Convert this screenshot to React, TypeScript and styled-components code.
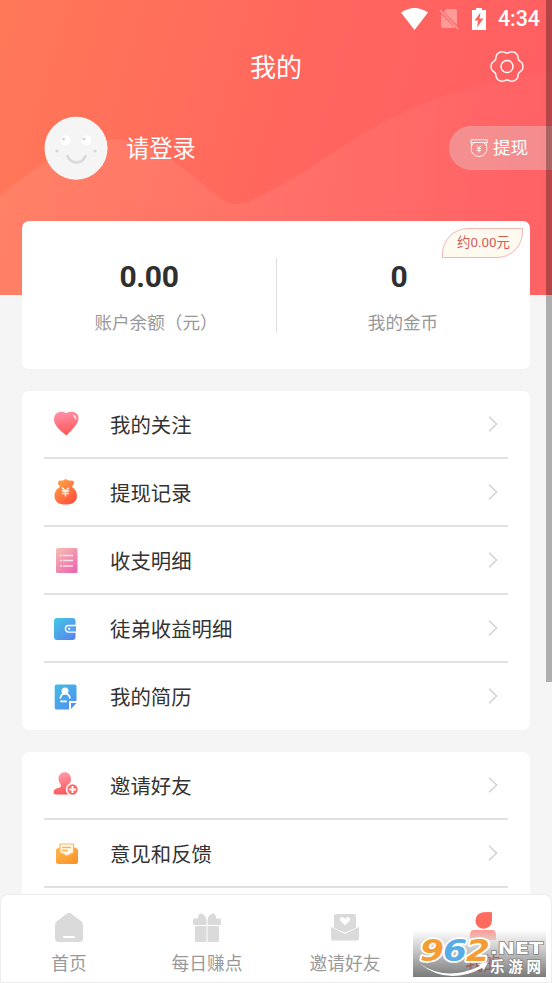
import React from 'react';
import styled, { createGlobalStyle } from 'styled-components';

const GlobalStyle = createGlobalStyle`
  * { box-sizing: border-box; }
  body {
    margin: 0;
    background: #f5f5f5;
    font-family: Roboto, "Noto Sans CJK SC", sans-serif;
  }
  svg { display: block; flex: none; }
`;

const Screen = styled.div`
  position: relative;
  width: 552px;
  height: 983px;
  overflow: hidden;
  display: flex;
  flex-direction: column;
  background: #f5f5f5;
`;

const Header = styled.header`
  position: relative;
  flex: none;
  height: 295px;
  color: #fff;
`;

const Backdrop = styled.svg`
  position: absolute;
  inset: 0;
`;

const HeaderContent = styled.div`
  position: relative;
  display: flex;
  flex-direction: column;
`;

const StatusBar = styled.div`
  display: flex;
  align-items: center;
  justify-content: flex-end;
  gap: 11px;
  height: 38px;
  padding-right: 12px;
`;

const Clock = styled.span`
  font: 500 21.4px/38px Roboto, sans-serif;
`;

const TitleBar = styled.div`
  display: grid;
  grid-template-columns: 1fr auto 1fr;
  align-items: center;
  height: 58px;
  padding: 0 28px;
`;

const Title = styled.h1`
  grid-column: 2;
  margin: 0;
  padding-top: 2px;
  font-size: 26px;
  font-weight: 400;
  line-height: 56px;
`;

const SettingsButton = styled.span`
  justify-self: end;
`;

const Profile = styled.div`
  display: flex;
  align-items: center;
  height: 64px;
  margin-top: 20px;
  padding-left: 44px;
`;

const LoginText = styled.span`
  margin-left: 18px;
  padding-top: 2px;
  font-size: 23.3px;
  line-height: 34px;
`;

const WithdrawButton = styled.span`
  display: flex;
  align-items: center;
  gap: 5px;
  width: 103px;
  height: 44px;
  margin-left: auto;
  margin-bottom: 1px;
  padding-left: 21px;
  border-radius: 22px 0 0 22px;
  background: rgba(222, 222, 222, 0.34);
  font-size: 17.6px;
  line-height: 26px;
`;

const WithdrawText = styled.span`
  padding-top: 1px;
`;

const Card = styled.section`
  position: relative;
  flex: none;
  margin: 0 22px;
  border-radius: 7px;
  background: #fff;
`;

const BalanceCard = styled(Card)`
  display: grid;
  grid-template-columns: 254px 254px;
  height: 148px;
  margin-top: -74px;
`;

const Balance = styled.div<{ $divided?: boolean }>`
  position: relative;
  display: flex;
  flex-direction: column;
  align-items: center;
  padding-top: 37px;

  &::after {
    content: "";
    position: absolute;
    display: ${p => (p.$divided ? 'block' : 'none')};
    right: -1px;
    top: 37px;
    width: 1.5px;
    height: 74px;
    background: #dedede;
  }
`;

const Amount = styled.strong<{ $shift: number }>`
  font: 700 30px/38px Roboto, sans-serif;
  letter-spacing: -0.3px;
  color: #2f2f2f;
  transform: translateX(${p => p.$shift}px);
`;

const AmountLabel = styled.span<{ $indent?: number }>`
  margin-top: 13px;
  padding-left: ${p => p.$indent ?? 0}px;
  font-size: 17.6px;
  line-height: 28px;
  color: #999;
`;

const CoinValue = styled.span`
  position: absolute;
  top: 7px;
  right: 7px;
  display: flex;
  align-items: center;
  justify-content: center;
  width: 81px;
  height: 30px;
  padding-left: 2px;
  border: 1.5px solid #f5b5b3;
  border-radius: 26px 0 26px 0;
  background: #fffaf0;
  color: #d45c5b;
  font: 400 13.4px/26px Roboto, "Noto Sans CJK SC", sans-serif;
`;

const Menu = styled(Card)`
  margin-top: 22px;
  padding: 0 22px;
`;

const MenuRow = styled.div`
  display: flex;
  align-items: center;
  height: 68px;
  border-bottom: 2px solid #e0e0e0;
  padding: 0 10px 0 8px;

  &:last-child {
    height: 67px;
    border-bottom: 0;
  }
`;

const MenuLabel = styled.span`
  flex: 1;
  margin-left: 30px;
  padding-top: 3px;
  font-size: 20.4px;
  line-height: 30px;
  color: #333;
`;

const TabBar = styled.nav`
  position: absolute;
  left: 0;
  right: 0;
  bottom: 0;
  display: grid;
  grid-template-columns: repeat(4, 1fr);
  height: 89px;
  border-radius: 8px 8px 2px 2px;
  background: #fff;
  box-shadow: inset 0 0 0 1px #ededf0;
`;

const Tab = styled.div<{ $active?: boolean }>`
  display: flex;
  flex-direction: column;
  align-items: center;
  padding-top: 17px;
  font-size: 17.7px;
  line-height: 26px;
  color: ${p => (p.$active ? '#fb6a60' : '#999')};
`;

const TabLabel = styled.span`
  margin-top: 6px;
`;

const EdgeShade = styled.div`
  position: absolute;
  top: 0;
  right: 0;
  width: 6px;
  height: 682px;
  background: rgba(0, 0, 0, 0.29);
`;

const Watermark = styled.div`
  position: absolute;
  left: 413px;
  top: 930px;
  width: 133px;
  height: 47px;
  background: linear-gradient(rgba(90, 90, 90, 0), rgba(95, 95, 95, 0.36) 45%, rgba(85, 85, 85, 0.78));
`;

const WaveBackdrop = () => (
  <Backdrop width="552" height="295" viewBox="0 0 552 295">
    <defs>
      <linearGradient id="headerFill" gradientUnits="userSpaceOnUse" x1="0" y1="60" x2="500" y2="200">
        <stop offset="0" stopColor="#ff7858" />
        <stop offset="0.55" stopColor="#ff675d" />
        <stop offset="1" stopColor="#ff5f62" />
      </linearGradient>
      <linearGradient id="waveFill" x1="0" y1="0" x2="1" y2="0">
        <stop offset="0" stopColor="#fff" stopOpacity="0.08" />
        <stop offset="0.5" stopColor="#fff" stopOpacity="0.07" />
        <stop offset="1" stopColor="#fff" stopOpacity="0.02" />
      </linearGradient>
    </defs>
    <path fill="url(#headerFill)" d="M0 0h552v295H0z" />
    <path
      fill="url(#waveFill)"
      d="M0 196C36 165 74 140 112 139.500C157 139 193 178 219 197C233 207 238 206 258 197C310 173 350 136 410 109C460 87 510 79 552 71V295H0Z"
    />
  </Backdrop>
);

const WifiIcon = () => (
  <svg width="27" height="22" viewBox="0 0 27 22" fill="#fff">
    <path d="M0 4.500Q13.500-4.500 27 4.500L13.500 22Z" />
  </svg>
);

const NoSimIcon = () => (
  <svg width="21" height="22" viewBox="0 0 21 22">
    <path fill="#fff" fillOpacity="0.36" d="M7 1h9q2 0 2 2v14L5 4zM2 6l14 14H4q-2 0-2-2z" />
    <path stroke="#fff" strokeOpacity="0.38" strokeWidth="1.700" d="M1 2l18 19" />
  </svg>
);

const BatteryIcon = () => (
  <svg width="16" height="22" viewBox="-1 0 16 22">
    <path fill="#fff" d="M4 0h6v2h4v20H0V2h4z" />
    <path fill="#ff655f" d="M8.500 4.500L2.500 12.500h3.500L5 19.500 11.500 10.500H7.500z" />
  </svg>
);

// Six-lobed outline: the radius swells once every 60 degrees.
const gearOutline =
  Array.from({ length: 120 }, (_, i) => {
    const angle = (i / 120) * Math.PI * 2;
    const radius = 14.9 + 1.25 * Math.cos(6 * angle) - 0.25 * Math.cos(12 * angle);
    return `${i ? 'L' : 'M'}${(17 + radius * Math.cos(angle)).toFixed(2)} ${(16.5 + radius * Math.sin(angle)).toFixed(2)}`;
  }).join('') + 'Z';

const GearIcon = () => (
  <svg width="34" height="34" viewBox="0 0 34 34" fill="none" stroke="#fff" strokeWidth="1.400">
    <path d={gearOutline} />
    <circle cx="17" cy="16.500" r="6" />
  </svg>
);

const AvatarFace = () => (
  <svg width="64" height="64" viewBox="0 0 64 64">
    <circle cx="32" cy="32.200" r="31" fill="#f5f5f6" stroke="#fffdfc" />
    <circle cx="21.500" cy="24.500" r="5" fill="#fff" />
    <circle cx="42.500" cy="24.500" r="5" fill="#fff" />
    <g fill="#d5d6d8">
      <circle cx="19.500" cy="23" r="1.600" />
      <circle cx="40" cy="23" r="1.600" />
      <circle cx="13" cy="35" r="1.600" />
      <circle cx="51" cy="35" r="1.600" />
    </g>
    <path fill="none" stroke="#d8d9db" strokeWidth="2.600" strokeLinecap="round" d="M23.500 40C27 48.500 38 48.500 41.500 40" />
  </svg>
);

const WithdrawIcon = () => (
  <svg width="18" height="18" viewBox="0 0 18 18" fill="none" stroke="#fff" strokeOpacity="0.85">
    <path d="M.7 3.500V.8h16.600v2.700zM1.500 3.500v3M16.500 3.500v3" />
    <path d="M4.500 3.500Q1 5.500 1 9.500a8 8 0 0 0 16 0Q17 5.500 13.500 3.500" />
    <path strokeWidth="1" d="M7 6.500l2 2.500 2-2.500M9 9v4.500M6.800 9.500h4.400M6.800 11.500h4.400" />
  </svg>
);

const HeartIcon = () => (
  <svg width="28" height="28" viewBox="0 0 28 28">
    <defs>
      <linearGradient id="heartFill" x1="0.3" y1="0" x2="0.5" y2="1">
        <stop stopColor="#ff91aa" />
        <stop offset="1" stopColor="#ff5653" />
      </linearGradient>
    </defs>
    <path fill="url(#heartFill)" d="M14.300 3.300C16 1.500 22 .8 25 4C29.500 10 23.500 16.500 14.300 25.500C5 18.500 0 12.500 2.800 5.500C5 .8 11.500 .8 14.300 3.300Z" />
    <path stroke="#ffe1e5" strokeWidth="1.500" strokeLinecap="round" fill="none" d="M21.500 5.500q2 1 2.200 3.500" />
  </svg>
);

const PouchIcon = () => (
  <svg width="28" height="28" viewBox="0 0 28 28">
    <defs>
      <linearGradient id="pouchFill" x1="0" y1="0" x2="0.7" y2="1">
        <stop stopColor="#ffad49" />
        <stop offset="1" stopColor="#ff513c" />
      </linearGradient>
    </defs>
    <path fill="url(#pouchFill)" d="M7.500 2.500l3.500 0 2.500-1.500L16.500 2.500l3.500 0q2.500 .5 2 3L20 9c3.500 2 5 5.500 5 9 0 6-5 8.500-11.500 8.500S2.500 24 2.500 18C2.500 14.500 4 11 8 9L6 5.500Q5.500 3 7.500 2.500z" />
    <path fill="none" stroke="#fff4e8" strokeWidth="1.500" d="M10 9.500l3.500 3.500L17 9.500m-3.500 3.500v5.500M9.800 13h7.400M10 15.500h7" />
  </svg>
);

const LedgerIcon = () => (
  <svg width="28" height="28" viewBox="0 0 28 28">
    <defs>
      <linearGradient id="ledgerFill" x1="0" y1="0" x2="0.7" y2="1">
        <stop stopColor="#f6c0ae" />
        <stop offset="1" stopColor="#ed6bb1" />
      </linearGradient>
    </defs>
    <rect x="4" y="2" width="21.500" height="25" rx="1.500" fill="url(#ledgerFill)" />
    <path stroke="#fff" strokeOpacity="0.75" strokeWidth="1.400" d="M8 9.500h2m1 0h10M8 14.500h2m1 0h10M8 20h2m1 0h10" />
  </svg>
);

const WalletIcon = () => (
  <svg width="28" height="28" viewBox="0 0 28 28">
    <defs>
      <linearGradient id="walletFill" x1="0" y1="0" x2="0.8" y2="1">
        <stop stopColor="#45c9e6" />
        <stop offset="1" stopColor="#5686ee" />
      </linearGradient>
    </defs>
    <rect x="2" y="4" width="21.500" height="22" rx="3" fill="url(#walletFill)" />
    <path fill="#58a3ec" stroke="#fff" strokeWidth="1.400" d="M24 11.500h-7.300a3.300 3.300 0 0 0 0 6.600H24" />
    <circle cx="17.200" cy="14.800" r="1.100" fill="#fff" />
  </svg>
);

const ResumeIcon = () => (
  <svg width="28" height="28" viewBox="0 0 28 28">
    <defs>
      <linearGradient id="resumeFill" x1="0" y1="0" x2="0.8" y2="1">
        <stop stopColor="#42bde4" />
        <stop offset="1" stopColor="#5291ee" />
      </linearGradient>
    </defs>
    <path fill="url(#resumeFill)" d="M4.500 1.500h18q2 0 2 2V18H17v8.500H4.500q-1.800 0-1.800-2v-21q0-2 1.800-2z" />
    <path fill="#4d94ea" d="M19 20h5.500L19 26z" />
    <circle cx="13" cy="8" r="3.500" fill="#fff" />
    <path fill="none" stroke="#fff" strokeWidth="1.800" d="M8.300 15.500C9 9 17 9 18 15.500M8.300 18.300h6.500" />
  </svg>
);

const InviteIcon = () => (
  <svg width="28" height="28" viewBox="0 0 28 28">
    <defs>
      <linearGradient id="inviteFill" x1="0.3" y1="0" x2="0.5" y2="1">
        <stop stopColor="#ff9bad" />
        <stop offset="1" stopColor="#fc5759" />
      </linearGradient>
    </defs>
    <path fill="url(#inviteFill)" d="M6.500 8c0-9 12.500-9 12.500 0 0 4-2 5-2.500 7 0 1 5 2 6 4v4.500H3.500q-2 0-2-2c0-4 4-4 7-5.500C10.500 14 6.500 12 6.500 8z" />
    <circle cx="20.500" cy="18.500" r="5.900" fill="#f96a6c" stroke="#fff" strokeWidth="1.500" />
    <path stroke="#fff" strokeWidth="1.800" d="M17 18.500h7M20.500 15v7" />
  </svg>
);

const FeedbackIcon = () => (
  <svg width="28" height="28" viewBox="0 0 28 28">
    <defs>
      <linearGradient id="feedbackFill" x1="0" y1="0" x2="1" y2="1">
        <stop stopColor="#ffb64d" />
        <stop offset="1" stopColor="#fa9025" />
      </linearGradient>
    </defs>
    <path fill="url(#feedbackFill)" d="M4 10.500l3-2h16l3 2v12.500q0 2-2 2H6q-2 0-2-2z" />
    <path fill="#fffaf0" stroke="#ffb85b" strokeWidth="1.200" d="M8 5h13.500v8.500L15 17l-7-3.500z" />
    <path stroke="#ffb255" strokeWidth="1.400" d="M10 8.500h9M10 11.500h6" />
  </svg>
);

const Chevron = () => (
  <svg width="10" height="17" viewBox="0 0 10 17" fill="none" stroke="#cfcfcf" strokeWidth="1.300">
    <path d="M1 .8L8.700 8 1 15.300" />
  </svg>
);

const HomeIcon = () => (
  <svg width="32" height="34" viewBox="0 0 32 34">
    <path fill="#dadada" d="M14 2.500q2-1.500 4 0L28.500 10.500Q30 11.500 30 14v13.500q0 3.500-4 3.500H6q-4 0-4-3.500V14q0-2.500 1.500-3.500z" />
    <path stroke="#fff" strokeWidth="2" strokeLinecap="round" d="M11 26h10" />
  </svg>
);

const GiftIcon = () => (
  <svg width="32" height="34" viewBox="0 0 32 34" fill="#dadada">
    <path d="M7 7C7 1 12 1 15 6.500V8H7zm18 0c0-6-5-6-8-.5V8h8z" />
    <rect x="2" y="7.500" width="13.500" height="6.500" rx="1.500" />
    <rect x="16.500" y="7.500" width="13.500" height="6.500" rx="1.500" />
    <path d="M4 15h11.500v16H5q-1 0-1-1zM16.500 15H28v15q0 1-1 1H16.500z" />
  </svg>
);

const EnvelopeIcon = () => (
  <svg width="32" height="34" viewBox="0 0 32 34">
    <path fill="#dadada" d="M7 3h18q2 0 2 2v12l-11 4.500L5 17V5q0-2 2-2z" />
    <path fill="#dadada" d="M2 16l14 7 14-7v11q0 2.500-2 2.500H4q-2 0-2-2.500z" />
    <path fill="#fff" d="M16 14.500l-4.500-4.500C9 6.500 14 4.500 16 8 18 4.500 23 6.500 20.500 10z" />
  </svg>
);

const PersonIcon = () => (
  <svg width="32" height="34" viewBox="0 0 32 34">
    <defs>
      <linearGradient id="personFill" x1="0" y1="0" x2="0" y2="1">
        <stop stopColor="#ff9a91" />
        <stop offset="1" stopColor="#fed8d4" />
      </linearGradient>
    </defs>
    <path fill="#ff6b5f" d="M16.500 1.200q4-.2 8.500 0V9.500a8.300 8.300 0 1 1-8.500-8.300z" />
    <path fill="url(#personFill)" d="M7 19h18q4 0 4 5v5H3v-5q0-5 4-5z" />
  </svg>
);

const digits = [
  { char: '9', x: 7, color: '#f69c34' },
  { char: '6', x: 30, color: '#58ade4' },
  { char: '2', x: 53, color: '#f69c34' },
];

const WatermarkLogo = () => (
  <svg width="133" height="47" viewBox="0 0 133 47">
    <g fontFamily="DejaVu Sans" fontWeight="700" fontStyle="italic" fontSize="30" strokeLinejoin="round">
      {digits.map(({ char, x, color }) => (
        <text key={char} x={x} y="30.500" fill={color} stroke="#fff" strokeWidth="3.500" paintOrder="stroke" textLength="24" lengthAdjust="spacingAndGlyphs">
          {char}
        </text>
      ))}
    </g>
    <path fill="#fff" d="M7 34Q34 52 67 36l-2-2 10-2-4 8-2-2Q35 56 7 34z" />
    <g fill="#fff" stroke="#858585" strokeWidth="1.500" paintOrder="stroke" fontWeight="700">
      <text x="77" y="23.500" fontFamily="DejaVu Sans" fontSize="16.500" textLength="53" lengthAdjust="spacingAndGlyphs">.NET</text>
      <text x="77" y="42" fontFamily="Noto Sans CJK SC" fontSize="14.500" textLength="51">乐游网</text>
    </g>
  </svg>
);

const accountItems = [
  { label: '我的关注', Icon: HeartIcon },
  { label: '提现记录', Icon: PouchIcon },
  { label: '收支明细', Icon: LedgerIcon },
  { label: '徒弟收益明细', Icon: WalletIcon },
  { label: '我的简历', Icon: ResumeIcon },
];

const serviceItems = [
  { label: '邀请好友', Icon: InviteIcon },
  { label: '意见和反馈', Icon: FeedbackIcon },
];

const tabs = [
  { label: '首页', Icon: HomeIcon },
  { label: '每日赚点', Icon: GiftIcon },
  { label: '邀请好友', Icon: EnvelopeIcon },
  { label: '我的', Icon: PersonIcon, active: true },
];

type Item = { label: string; Icon: React.ComponentType };

const MenuItem = ({ label, Icon }: Item) => (
  <MenuRow>
    <Icon />
    <MenuLabel>{label}</MenuLabel>
    <Chevron />
  </MenuRow>
);

export default function App() {
  return (
    <>
      <GlobalStyle />
      <Screen>
        <Header>
          <WaveBackdrop />
          <HeaderContent>
            <StatusBar>
              <WifiIcon />
              <NoSimIcon />
              <BatteryIcon />
              <Clock>4:34</Clock>
            </StatusBar>
            <TitleBar>
              <Title>我的</Title>
              <SettingsButton><GearIcon /></SettingsButton>
            </TitleBar>
            <Profile>
              <AvatarFace />
              <LoginText>请登录</LoginText>
              <WithdrawButton>
                <WithdrawIcon />
                <WithdrawText>提现</WithdrawText>
              </WithdrawButton>
            </Profile>
          </HeaderContent>
        </Header>

        <BalanceCard>
          <Balance $divided>
            <Amount $shift={0}>0.00</Amount>
            <AmountLabel $indent={14}>账户余额（元）</AmountLabel>
          </Balance>
          <Balance>
            <Amount $shift={-4}>0</Amount>
            <AmountLabel>我的金币</AmountLabel>
            <CoinValue>约0.00元</CoinValue>
          </Balance>
        </BalanceCard>

        <Menu>
          {accountItems.map(item => <MenuItem key={item.label} {...item} />)}
        </Menu>
        <Menu>
          {serviceItems.map(item => <MenuItem key={item.label} {...item} />)}
          <MenuRow />
        </Menu>

        <TabBar>
          {tabs.map(({ label, Icon, active }) => (
            <Tab key={label} $active={active}>
              <Icon />
              <TabLabel>{label}</TabLabel>
            </Tab>
          ))}
        </TabBar>
        <EdgeShade />
        <Watermark><WatermarkLogo /></Watermark>
      </Screen>
    </>
  );
}
